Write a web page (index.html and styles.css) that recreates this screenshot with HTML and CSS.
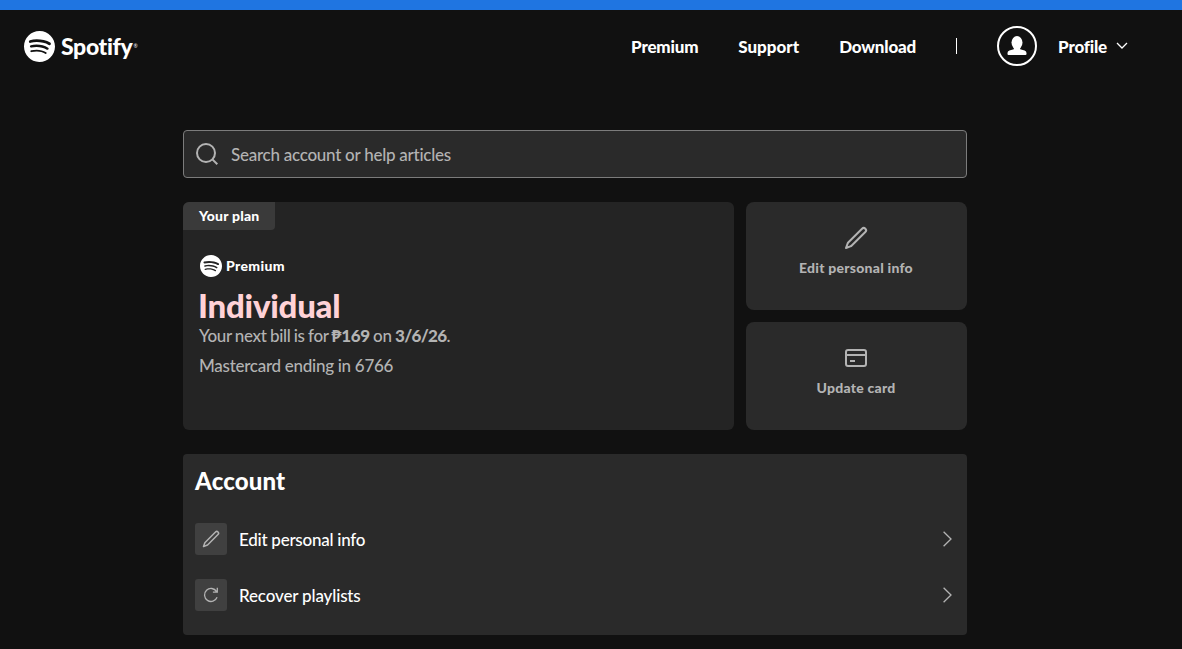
FILE: index.html
```html
<!DOCTYPE html>
<html lang="en">
<head>
<meta charset="utf-8">
<title>Account overview - Spotify</title>
<link rel="stylesheet" href="styles.css">
</head>
<body>
<svg class="defs" aria-hidden="true">
  <symbol id="logo" viewBox="0 0 24 24"><path transform="rotate(1 12 12)" d="M12 0C5.4 0 0 5.4 0 12s5.4 12 12 12 12-5.4 12-12S18.66 0 12 0zm5.521 17.34c-.24.359-.66.48-1.021.24-2.82-1.74-6.36-2.101-10.561-1.141-.418.122-.779-.179-.899-.539-.12-.421.18-.78.54-.9 4.56-1.021 8.52-.6 11.64 1.32.42.18.479.659.301 1.02zm1.44-3.3c-.301.42-.841.6-1.262.3-3.239-1.98-8.159-2.58-11.939-1.38-.479.12-1.02-.12-1.14-.6-.12-.48.12-1.021.6-1.141C9.6 9.9 15 10.561 18.72 12.84c.361.181.54.78.241 1.2zm.12-3.36C15.24 8.4 8.82 8.16 5.16 9.301c-.6.179-1.2-.181-1.38-.721-.18-.601.18-1.2.72-1.381 4.26-1.26 11.28-1.02 15.721 1.621.539.3.719 1.02.419 1.56-.299.421-1.02.599-1.559.3z"/></symbol>
  <symbol id="pencil" viewBox="0 0 24 24"><path d="M17.318 1.975a3.329 3.329 0 1 1 4.707 4.707L8.451 20.256c-.49.49-1.082.867-1.735 1.103L2.34 22.94a1 1 0 0 1-1.28-1.28l1.581-4.376a4.726 4.726 0 0 1 1.103-1.735L17.318 1.975zm3.293 1.414a1.329 1.329 0 0 0-1.88 0L5.159 16.963c-.283.283-.5.624-.636 1l-.857 2.372 2.371-.857a2.726 2.726 0 0 0 1.001-.636L20.611 5.268a1.329 1.329 0 0 0 0-1.879z"/></symbol>
  <symbol id="chevron" viewBox="0 0 16 16"><path d="M4.600 .8 12 8 4.600 15.200" fill="none" stroke="currentColor" stroke-width="1.300"/></symbol>
</svg>
<div class="strip"></div>
<header class="header">
  <a class="brand"><svg class="brand-mark"><use href="#logo"/></svg><span class="brand-name">Spotify</span><span class="brand-reg">®</span></a>
  <nav class="nav">
    <a>Premium</a>
    <a class="nav-support">Support</a>
    <a>Download</a>
    <span class="divider"></span>
    <button class="profile">
      <span class="avatar"><svg viewBox="0 0 20 20"><ellipse cx="10" cy="6.6" rx="5.5" ry="6.6"/><path d="M6.8 11v2.2L2.4 14.4Q.5 15 .5 17v1q0 1 1 1h17q1 0 1-1v-1q0-2-1.900-2.600L13.200 13.200V11z"/></svg></span>
      <span class="profile-name">Profile</span>
      <svg class="caret" viewBox="0 0 12 8"><path d="M1 1l5 5 5-5" fill="none" stroke="currentColor" stroke-width="1.300"/></svg>
    </button>
  </nav>
</header>
<main class="main">
  <div class="search">
    <svg class="search-icon" viewBox="0 0 24 24"><circle cx="11" cy="11" r="9" /><path d="M17.400 17.400 22.300 22.300"/></svg>
    <span class="search-hint">Search account or help articles</span>
  </div>
  <section class="overview">
    <article class="plan">
      <span class="plan-tag">Your plan</span>
      <div class="plan-body">
        <div class="plan-brand"><svg><use href="#logo"/></svg><span>Premium</span></div>
        <h1 class="plan-title">Individual</h1>
        <p class="bill">Your next bill is for <b>₱169</b> on <b class="date">3/6/26</b>.</p>
        <p class="card-line">Mastercard ending in 6766</p>
      </div>
    </article>
    <div class="actions">
      <a class="action"><svg><use href="#pencil"/></svg><span>Edit personal info</span></a>
      <a class="action"><svg viewBox="0 0 24 24"><path fill-rule="evenodd" d="M4 3h16a3 3 0 0 1 3 3v12a3 3 0 0 1-3 3H4a3 3 0 0 1-3-3V6a3 3 0 0 1 3-3zm0 2a1 1 0 0 0-1 1v2h18V6a1 1 0 0 0-1-1zm-1 5v8a1 1 0 0 0 1 1h16a1 1 0 0 0 1-1v-8zM6 14h5v2H6z"/></svg><span>Update card</span></a>
    </div>
  </section>
  <section class="account">
    <h2>Account</h2>
    <a class="row"><span class="tile"><svg class="tile-pencil"><use href="#pencil"/></svg></span><span class="row-edit">Edit personal info</span><svg class="chev"><use href="#chevron"/></svg></a>
    <a class="row"><span class="tile"><svg viewBox="0 0 16 16"><path d="M14.100 10.300A6.500 6.500 0 1 1 13.600 4.600M14.300 .8v4.400h-4.400" fill="none" stroke="currentColor" stroke-width="1.300"/></svg></span><span class="row-recover">Recover playlists</span><svg class="chev"><use href="#chevron"/></svg></a>
  </section>
</main>
</body>
</html>
```
FILE: styles.css
```css
* { box-sizing: border-box; }
body { margin: 0; height: 649px; overflow: hidden; background: #111; color: #fff; font-family: Lato, "Noto Sans", sans-serif; font-size: 17px; }
svg { display: block; fill: currentColor; flex: none; }
h1, h2, p { margin: 0; }
span, a { white-space: nowrap; }
.defs { display: none; }
.strip { height: 10px; background: #1f75e1; }
.header { height: 72px; padding: 0 54px 0 24px; display: flex; justify-content: space-between; align-items: center; }
.brand { display: flex; align-items: center; }
.brand-mark { width: 31px; height: 31px; }
.brand-name { margin-left: 6px; padding-bottom: 1px; font-size: 23px; font-weight: 900; letter-spacing: -.35px; }
.brand-reg { font-size: 5px; margin-left: 1px; }
.nav { display: flex; align-items: center; gap: 40px; font-weight: 900; letter-spacing: -.2px; }
.nav-support { letter-spacing: 0; }
.divider { width: 1px; height: 16px; background: #fff; }
.profile { display: flex; align-items: center; padding: 0; border: 0; background: none; color: inherit; font: inherit; letter-spacing: inherit; }
.avatar { width: 40px; height: 40px; border: 2px solid #fff; border-radius: 50%; display: grid; place-items: center; margin-right: 21px; }
.avatar svg { width: 20px; height: 20px; }
.caret { width: 12px; height: 8px; margin-left: 9px; }
.main { width: 784px; margin: 48px 0 0 183px; display: flex; flex-direction: column; gap: 24px; }
.search { height: 48px; border: 1px solid #7c7c7c; border-radius: 4px; background: #2a2a2a; display: flex; align-items: center; padding-left: 11px; color: #b3b3b3; }
.search-icon { width: 24px; height: 24px; fill: none; stroke: currentColor; stroke-width: 2; margin-right: 12px; }
.search-hint { font-weight: 500; letter-spacing: -.26px; }
.overview { display: grid; grid-template-columns: 551px 221px; gap: 12px; height: 228px; }
.plan { background: #242424; border-radius: 6px; display: flex; flex-direction: column; align-items: flex-start; }
.plan-tag { height: 28px; width: 92px; padding-left: 16px; background: #3a3a3a; border-radius: 6px 0 4px 0; font-size: 14px; font-weight: 900; line-height: 28px; letter-spacing: .2px; }
.plan-body { padding: 24px 16px; color: #b3b3b3; }
.plan-brand { display: flex; align-items: center; height: 24px; gap: 4px; padding-left: 1px; color: #fff; font-size: 14px; font-weight: 900; letter-spacing: .35px; }
.plan-brand svg { width: 22px; height: 22px; }
.plan-brand span { padding-bottom: 1px; }
.plan-title { color: #ffd2d7; font-size: 33px; line-height: 40px; font-weight: 900; margin: 7px 0 0 -1px; letter-spacing: -.25px; }
.bill, .card-line { line-height: 24px; white-space: nowrap; font-weight: 500; letter-spacing: -.28px; }
.bill { height: 29px; line-height: 22px; letter-spacing: -.34px; word-spacing: -.6px; }
.bill b { font-weight: 900; }
.bill .date { letter-spacing: -.65px; }
.actions { display: grid; gap: 12px; }
.action { background: #2a2a2a; border-radius: 8px; display: flex; flex-direction: column; align-items: center; padding: 24px 1px 0 0; gap: 8px; color: #b3b3b3; font-size: 14px; font-weight: 900; line-height: 20px; letter-spacing: .24px; }
.action svg { width: 24px; height: 24px; }
.account { height: 181px; background: #2a2a2a; border-radius: 4px; padding: 12px 12px 0; }
.account h2 { font-size: 24px; line-height: 30px; font-weight: 900; height: 45px; letter-spacing: .15px; }
.row { height: 56px; display: flex; align-items: center; font-weight: 500; }
.row-edit { letter-spacing: -.25px; }
.row-recover { letter-spacing: -.15px; }
.tile { width: 32px; height: 32px; margin-right: 12px; border-radius: 3px; background: #404040; color: #b3b3b3; display: grid; place-items: center; }
.tile svg { width: 16px; height: 16px; }
.tile .tile-pencil { width: 18px; height: 18px; }
.chev { width: 16px; height: 16px; margin-left: auto; color: #b3b3b3; }
```
